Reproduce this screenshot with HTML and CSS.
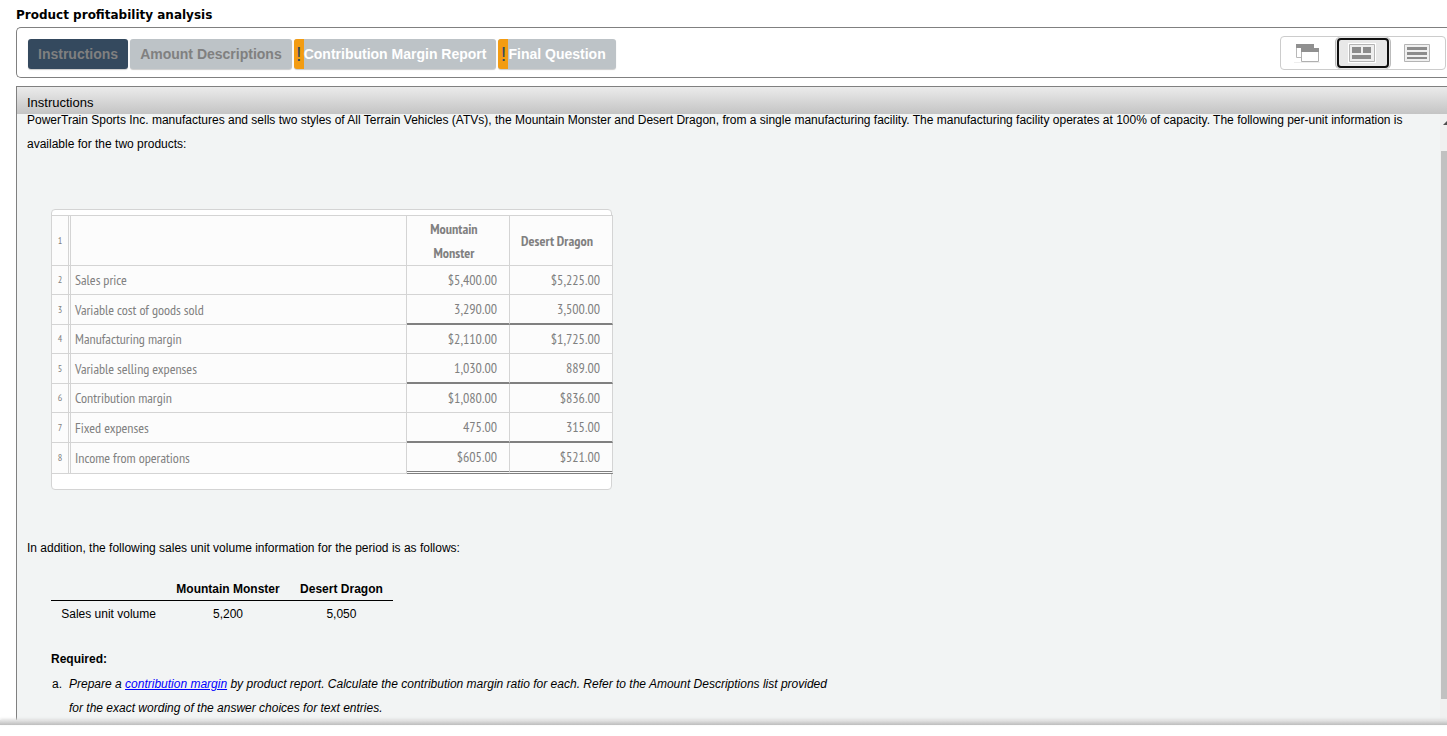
FILE: index.html
```html
<!DOCTYPE html>
<html lang="en">
<head>
<meta charset="utf-8">
<title>Product profitability analysis</title>
<link rel="stylesheet" href="styles.css">
</head>
<body>
<div class="page">
  <h1 class="title">Product profitability analysis</h1>
  <div class="toolbar">
    <nav class="tabs">
      <button class="tab tab-active" type="button">Instructions</button>
      <button class="tab" type="button">Amount Descriptions</button>
      <button class="tab tab-flagged" type="button"><span class="flag">!</span>Contribution Margin Report</button>
      <button class="tab tab-flagged" type="button"><span class="flag">!</span>Final Question</button>
    </nav>
    <div class="views">
      <button class="view" type="button" aria-label="Stacked windows">
        <svg width="26" height="20" viewBox="0 0 26 20"><path d="M0 19.500h26" stroke="#eee"/><path d="M2.500 2v12.500h17V2z" fill="#fff" stroke="#b8b8b8"/><path d="M2 1h18v4H2z" fill="#909090"/><path d="M7.500 6v12.500h17V6z" fill="#fff" stroke="#b0b0b0"/><path d="M7 5h18v4H7z" fill="#909090"/></svg>
      </button>
      <button class="view view-active" type="button" aria-label="Tiled windows">
        <svg width="28" height="20" viewBox="0 0 28 20"><path d="M0 0h28v20H0z" fill="#fff"/><path d="M1.500 1.500h25v17h-25z" fill="#eee" stroke="#b4b4b4"/><path d="M4 4h9v6H4zM15 4h8v6h-8zM4 12h19v4H4z" fill="#8c8c8c"/></svg>
      </button>
      <button class="view" type="button" aria-label="List">
        <svg width="26" height="18" viewBox="0 0 26 18"><path d="M.5.5h25v17H.5z" fill="#f0f0f0" stroke="#b4b4b4"/><path d="M3 3h20v3H3zM3 8h20v3H3zM3 13h20v2H3z" fill="#8c8c8c"/></svg>
      </button>
    </div>
  </div>
  <main class="panel">
    <h2 class="panel-head">Instructions</h2>
    <div class="panel-row">
      <div class="content">
        <p class="intro">PowerTrain Sports Inc. manufactures and sells two styles of All Terrain Vehicles (ATVs), the Mountain Monster and Desert Dragon, from a single manufacturing facility. The manufacturing facility operates at 100% of capacity. The following per-unit information is available for the two products:</p>
        <div class="sheet">
          <table class="ledger">
            <tr><td class="num">1</td><td class="label"></td><th>Mountain Monster</th><th>Desert Dragon</th></tr>
            <tr><td class="num">2</td><td class="label">Sales price</td><td>$5,400.00</td><td>$5,225.00</td></tr>
            <tr class="sum"><td class="num">3</td><td class="label">Variable cost of goods sold</td><td>3,290.00</td><td>3,500.00</td></tr>
            <tr><td class="num">4</td><td class="label">Manufacturing margin</td><td>$2,110.00</td><td>$1,725.00</td></tr>
            <tr class="sum"><td class="num">5</td><td class="label">Variable selling expenses</td><td>1,030.00</td><td>889.00</td></tr>
            <tr><td class="num">6</td><td class="label">Contribution margin</td><td>$1,080.00</td><td>$836.00</td></tr>
            <tr class="sum"><td class="num">7</td><td class="label">Fixed expenses</td><td>475.00</td><td>315.00</td></tr>
            <tr class="total"><td class="num">8</td><td class="label">Income from operations</td><td>$605.00</td><td>$521.00</td></tr>
          </table>
        </div>
        <p class="note">In addition, the following sales unit volume information for the period is as follows:</p>
        <table class="volume">
          <tr><th></th><th>Mountain Monster</th><th>Desert Dragon</th></tr>
          <tr><td>Sales unit volume</td><td>5,200</td><td>5,050</td></tr>
        </table>
        <div class="required">
          <strong>Required:</strong>
          <ol class="tasks">
            <li><em>Prepare a <a href="#">contribution margin</a> by product report. Calculate the contribution margin ratio for each. Refer to the Amount Descriptions list provided for the exact wording of the answer choices for text entries.</em></li>
          </ol>
        </div>
      </div>
      <div class="track">
        <svg class="arrow" width="6" height="37" viewBox="0 0 6 37"><path d="M2 11L6 7v4z" fill="#505050"/></svg>
        <div class="thumb"></div>
      </div>
    </div>
  </main>
  <div class="shade"></div>
</div>
</body>
</html>
```
FILE: styles.css
```css
* { box-sizing: border-box; }
body {
  margin: 0;
  background: #fff;
  color: #000;
  font: 12px/24px "Liberation Sans", Arial, sans-serif;
  overflow: hidden;
}
.page {
  display: flex;
  flex-direction: column;
  height: 100vh;
  padding-bottom: 11px;
}
.title {
  margin: 0;
  padding: 3px 16px 0;
  font: bold 12px/24px "DejaVu Sans", Verdana, sans-serif;
}
.toolbar {
  flex: none;
  display: flex;
  justify-content: space-between;
  align-items: flex-start;
  margin: 0 0 8px 16px;
  height: 51px;
  border: 1px solid #808080;
  border-right: 0;
  border-radius: 5px 0 0 5px;
  padding: 8px 1px 0 11px;
}
.tabs { display: flex; gap: 2px; padding-top: 3px; }
.tab {
  display: flex;
  height: 30px;
  border: 0;
  border-radius: 3px;
  padding: 0 10px;
  overflow: hidden;
  background: #bdc3c7;
  box-shadow: 0 1px 1px #ccc;
  color: #808080;
  font: bold 14px/30px "Liberation Sans", Arial, sans-serif;
}
.tab-active { background: #34495e; }
.tab-flagged { padding-left: 0; color: #fff; }
.flag {
  width: 10px;
  background: #f39c12;
  color: #34495e;
  font-size: 20px;
  font-weight: normal;
  text-align: center;
}
.views {
  display: flex;
  height: 34px;
  border: 1px solid #ccc;
  border-radius: 4px;
}
.view {
  display: flex;
  align-items: center;
  justify-content: center;
  width: 54px;
  height: 32px;
  border: 0;
  padding: 0 2px 0 0;
  background: none;
}
.view-active {
  margin: 0 1px;
  background: #e8e8e8;
  box-shadow: -1px 0 #bbb, 1px 0 #bbb;
  outline: 2px solid #101010;
  outline-offset: -3px;
  border-radius: 5px;
}
.panel {
  flex: 1;
  min-height: 0;
  display: flex;
  flex-direction: column;
  margin-left: 16px;
  border-top: 1px solid #808080;
  border-left: 1px solid #808080;
}
.panel-head {
  flex: none;
  height: 27px;
  margin: 0;
  padding: 4px 10px 0;
  background: linear-gradient(#ebebeb, #c4c4c4);
  font-size: 13px;
  font-weight: normal;
}
.panel-row {
  flex: 1;
  min-height: 0;
  display: flex;
  background: #f2f4f4;
}
.content { flex: 1; min-width: 0; padding: 0 34px 0 10px; }
.intro { margin: -6px 0 53px; }
.sheet {
  width: 561px;
  height: 281px;
  margin-left: 24px;
  padding-top: 5px;
  border: 1px solid #d4d4d4;
  border-radius: 4px;
  background: #fff;
}
.ledger {
  table-layout: fixed;
  width: 561px;
  border-collapse: separate;
  border-spacing: 0;
  border-top: 1px solid #d4d4d4;
  background: #fcfcfc;
  color: #808080;
  font-family: "PT Sans Narrow", "Liberation Sans Narrow", "Open Sans", sans-serif;
  font-size: 14px;
}
.ledger td, .ledger th {
  width: 103px;
  padding: 2px 12px;
  border-right: 1px solid #d4d4d4;
  border-bottom: 1px solid #d4d4d4;
  text-align: right;
}
.ledger th { padding: 1px 16px 0 8px; text-align: center; }
.ledger .num {
  width: 19px;
  padding: 0;
  border-right: 3px double #d4d4d4;
  font-size: 10px;
  text-align: center;
}
.ledger .label { width: auto; padding: 2px 4px; text-align: left; }
.ledger .sum td:nth-child(n+3) { border-bottom: 2px solid #808080; }
.ledger .total td:nth-child(n+3) { border-bottom: 3px double #808080; }
.note { margin: 46px 0 17px; }
.volume { width: 342px; margin-left: 24px; border-collapse: collapse; }
.volume td, .volume th { padding: 0 10px; text-align: center; white-space: nowrap; }
.volume th { padding-top: 1px; border-bottom: 1px solid #000; line-height: 22px; }
.volume td { padding-top: 1px; }
.required { margin: 21px 0 0 24px; }
.tasks {
  max-width: 778px;
  margin: 1px 0 0;
  padding: 0 0 0 1px;
  list-style: none;
  counter-reset: task;
}
.tasks li { display: flex; counter-increment: task; }
.tasks li::before { flex: none; width: 17px; content: counter(task, lower-alpha) "."; }
.tasks a { color: #00f; }
.track { flex: none; width: 7px; background: #f0f0f0; padding-left: 1px; display: flex; flex-direction: column; }
.arrow { flex: none; }
.thumb { flex: 1; margin-bottom: 21px; background: #c1c1c1; }
.shade {
  flex: none;
  height: 5px;
  background: linear-gradient(#e6e6e6, #bdbdbd);
  box-shadow: 0 -1px 3px #ddd;
}
```
